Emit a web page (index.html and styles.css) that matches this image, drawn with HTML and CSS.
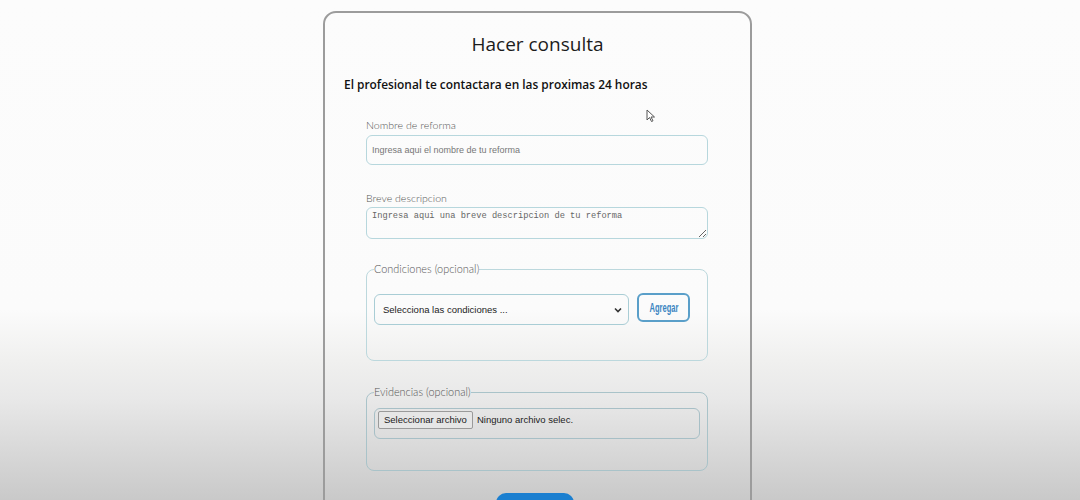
FILE: index.html
```html
<!DOCTYPE html>
<html lang="es">
<head>
<meta charset="utf-8">
<title>Hacer consulta</title>
<link rel="stylesheet" href="styles.css">
</head>
<body>
<div class="page">
  <div class="card">
    <h1 class="title">Hacer consulta</h1>
    <p class="subtitle">El profesional te contactara en las proximas 24 horas</p>
    <form class="form">
      <label class="label">Nombre de reforma</label>
      <input class="input" type="text" placeholder="Ingresa aqui el nombre de tu reforma">
      <label class="label label-gap">Breve descripcion</label>
      <textarea class="textarea" placeholder="Ingresa aqui una breve descripcion de tu reforma"></textarea>
      <fieldset class="group group-cond">
        <legend class="legend">Condiciones (opcional)</legend>
        <div class="cond-row">
          <div class="select">
            <span>Selecciona las condiciones ...</span>
            <svg class="chev" width="8" height="6" viewBox="0 0 8 6"><path d="M1 1.5 L4 4.5 L7 1.5" fill="none" stroke="#333" stroke-width="1.6"/></svg>
          </div>
          <button type="button" class="add"><span class="add-text">Agregar</span></button>
        </div>
      </fieldset>
      <fieldset class="group group-evid">
        <legend class="legend">Evidencias (opcional)</legend>
        <div class="file">
          <span class="file-btn">Seleccionar archivo</span>
          <span class="file-text">Ninguno archivo selec.</span>
        </div>
      </fieldset>
      <div class="actions">
        <button type="button" class="send">Enviar</button>
      </div>
    </form>
  </div>
</div>
<svg class="cursor" width="10" height="14" viewBox="0 0 10 14"><path d="M1 1 L1 11 L3.5 8.5 L5.5 12.5 L7 11.8 L5 8 L8.5 8 Z" fill="#fff" stroke="#555" stroke-width="1"/></svg>
</body>
</html>
```
FILE: styles.css
```css
html, body {
  margin: 0;
  padding: 0;
  height: 100%;
  overflow: hidden;
}
body {
  background: linear-gradient(to bottom, #fcfcfc 0, #fbfbfb 310px, #f0f0ef 360px, #e8e8e8 400px, #dadada 445px, #c9c9c9 500px);
  font-family: "Open Sans", "Noto Sans", sans-serif;
  color: #222;
}
.page {
  padding-top: 11px;
  padding-left: 323px;
}
.card {
  width: 425px;
  height: 560px;
  border: 2px solid #9c9c9c;
  border-radius: 13px;
  padding-top: 18px;
  box-sizing: content-box;
}
.title {
  margin: 0;
  text-align: center;
  font-size: 19px;
  line-height: 26px;
  font-weight: 400;
  color: #1c1c1c;
}
.subtitle {
  margin: 18px 0 0 19px;
  font-size: 11.9px;
  line-height: 18px;
  font-weight: 600;
  color: #111;
}
.form {
  margin: 25px 0 0 41px;
  width: 342px;
  display: flex;
  flex-direction: column;
}
.label {
  font-family: Lato, "Noto Sans", sans-serif;
  font-weight: 300;
  font-size: 10.6px;
  line-height: 14px;
  color: #555;
}
.label-gap {
  margin-top: 26px;
}
.input {
  margin-top: 3px;
  height: 30px;
  box-sizing: border-box;
  border: 1.5px solid #b7d7dd;
  border-radius: 6px;
  background: transparent;
  padding: 0 5px;
  font-family: "Liberation Sans", Arial, sans-serif;
  font-size: 9px;
  outline: none;
}
.input::placeholder {
  color: #777;
}
.textarea {
  margin-top: 2px;
  height: 32px;
  box-sizing: border-box;
  border: 1.5px solid #b7d7dd;
  border-radius: 6px;
  background: transparent;
  padding: 3px 5px;
  font-family: "Liberation Mono", monospace;
  font-size: 8.7px;
  line-height: 11px;
  outline: none;
}
.textarea::placeholder {
  color: #666;
}
.group {
  margin: 0;
  border: 1.5px solid #bcd8dd;
  border-radius: 8px;
  padding: 0 7px;
  min-width: 0;
}
.group-cond {
  margin-top: 23px;
  height: 99px;
  box-sizing: border-box;
}
.group-evid {
  margin-top: 24px;
  height: 86px;
  box-sizing: border-box;
  border-color: #a9c3c9;
}
.legend {
  padding: 0;
  font-family: Lato, "Noto Sans", sans-serif;
  font-weight: 300;
  font-size: 10.9px;
  line-height: 14px;
  color: #555;
}
.cond-row {
  margin-top: 18px;
  display: flex;
  align-items: flex-start;
  gap: 8px;
}
.select {
  width: 255px;
  height: 31px;
  box-sizing: border-box;
  border: 1.5px solid #a9cdd5;
  border-radius: 6px;
  display: flex;
  align-items: center;
  justify-content: space-between;
  padding: 0 6px 0 8px;
  font-family: "Liberation Sans", Arial, sans-serif;
  font-size: 9.5px;
  color: #222;
}
.chev {
  display: block;
}
.add {
  margin-top: -1px;
  width: 53px;
  height: 29px;
  box-sizing: border-box;
  border: 2px solid #5a9fc9;
  border-radius: 6px;
  background: transparent;
  padding: 0;
  display: flex;
  align-items: center;
  justify-content: center;
}
.add-text {
  display: inline-block;
  color: #3b86c2;
  font-family: "Liberation Sans", sans-serif;
  font-size: 13px;
  font-weight: 700;
  transform: scaleX(0.58);
}
.file {
  margin-top: 9px;
  width: 326px;
  height: 31px;
  box-sizing: border-box;
  border: 1.5px solid #a7bfc6;
  border-radius: 6px;
  display: flex;
  align-items: flex-start;
  gap: 4px;
  padding: 2px 3px;
  font-family: "Liberation Sans", Arial, sans-serif;
  font-size: 9.5px;
  color: #222;
}
.file-btn {
  height: 18px;
  box-sizing: border-box;
  border: 1px solid #9a9a9a;
  border-radius: 2px;
  background: #e6e6e6;
  padding: 0 5px;
  line-height: 16px;
  color: #222;
}
.file-text {
  line-height: 18px;
}
.actions {
  margin-top: 22px;
  display: flex;
  justify-content: center;
}
.send {
  margin-left: -4px;
  width: 78px;
  height: 40px;
  border: none;
  border-radius: 10px;
  background: #1b7fd0;
  color: #fff;
  font-family: "Open Sans", sans-serif;
  font-size: 13px;
  padding: 16px 0 0;
  display: flex;
  align-items: flex-start;
  justify-content: center;
}
.cursor {
  position: absolute;
  left: 646px;
  top: 109px;
}
```
